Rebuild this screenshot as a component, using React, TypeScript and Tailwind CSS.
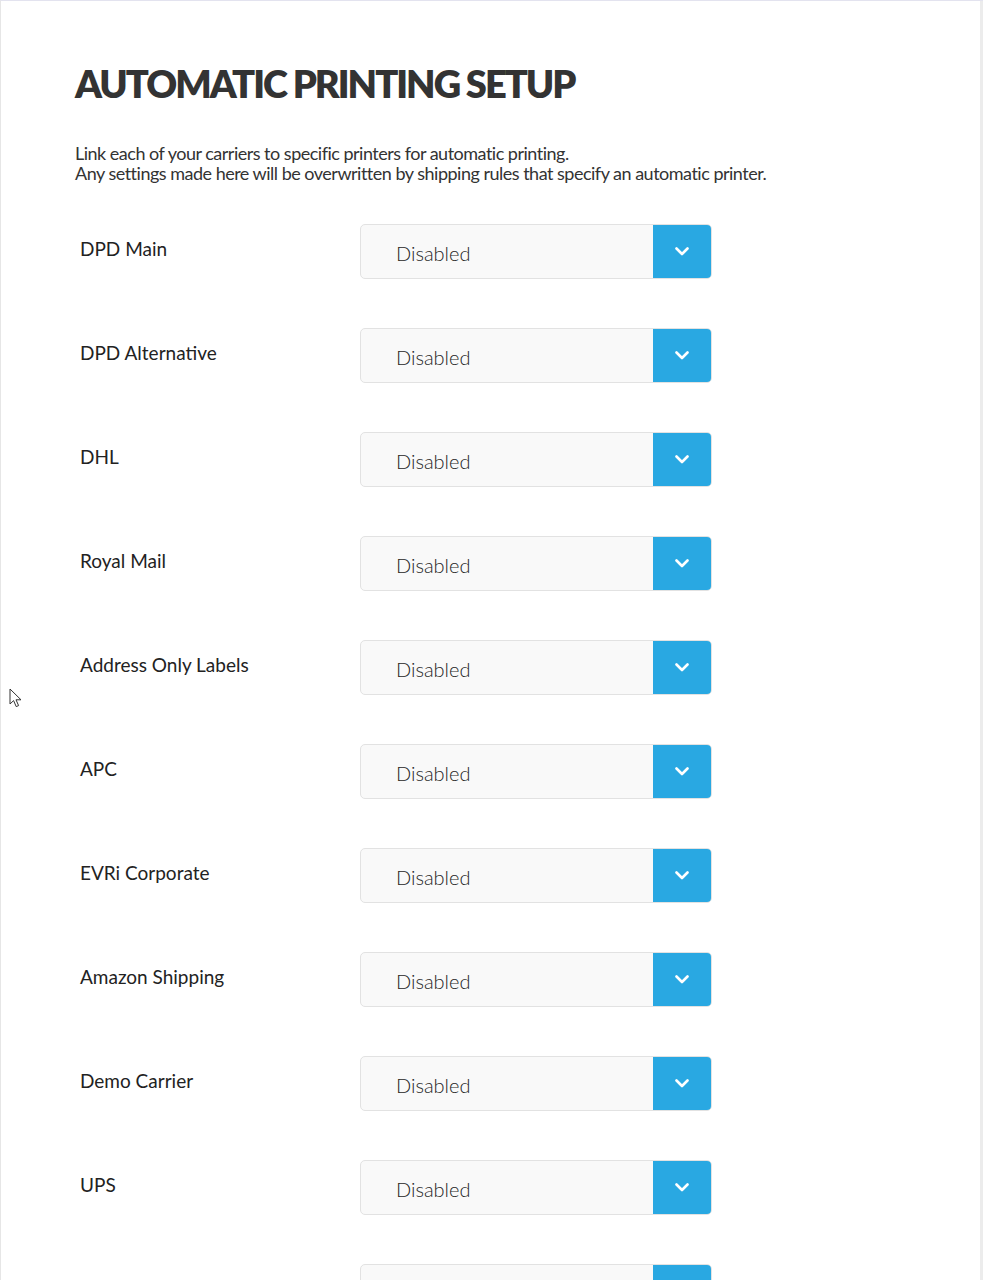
const CARRIERS = [
  'DPD Main',
  'DPD Alternative',
  'DHL',
  'Royal Mail',
  'Address Only Labels',
  'APC',
  'EVRi Corporate',
  'Amazon Shipping',
  'Demo Carrier',
  'UPS',
  'Yodel Direct',
];

function Chevron() {
  return (
    <svg width="14" height="9" viewBox="0 0 14 9" fill="none">
      <path d="M1.5 1.5 7 7l5.5-5.5" stroke="white" strokeWidth="2.6" strokeLinecap="round" strokeLinejoin="round" />
    </svg>
  );
}

function PrinterSelect() {
  return (
    <div className="flex h-[55px] w-[352px] overflow-hidden rounded-[5px] border border-[#e2e2e2] bg-[#f9f9f9]">
      <div className="flex flex-1 items-center pl-[35px] pt-[3px] text-[20px] font-light text-[#1f1f1f]">Disabled</div>
      <div className="flex w-[58px] items-center justify-center bg-[#29a8e2]">
        <Chevron />
      </div>
    </div>
  );
}

export default function App() {
  return (
    <div
      className="relative h-[1280px] overflow-hidden border-l border-t border-l-[#e6e6e6] border-t-[#e3e3ef] bg-white text-[#333]"
      style={{ fontFamily: 'Lato, "Open Sans", sans-serif' }}
    >
      <div className="absolute right-0 top-0 h-full w-[3px] bg-[#ececec]" />
      <div className="pl-[74px] pt-[60px]">
        <h1 className="text-[38px] font-extrabold leading-[44px] tracking-[-2px] text-[#333]">AUTOMATIC PRINTING SETUP</h1>
        <p className="mt-[38px] text-[18px] leading-[20px] tracking-[-0.5px] text-[#333]">
          Link each of your carriers to specific printers for automatic printing.
          <br />
          Any settings made here will be overwritten by shipping rules that specify an automatic printer.
        </p>
        <div className="mt-[41px] flex flex-col gap-[49px]">
          {CARRIERS.map((c) => (
            <div key={c} className="flex items-center">
              <div className="w-[285px] pb-[4px] pl-[5px] text-[19px] text-[#222]">{c}</div>
              <PrinterSelect />
            </div>
          ))}
        </div>
      </div>
      <svg className="absolute left-[8px] top-[687px]" width="14" height="20" viewBox="0 0 14 20">
        <path d="M1 1v15l3.6-3.4 2.6 6 2.4-1-2.6-5.8H12z" fill="white" stroke="#333" strokeWidth="1" strokeLinejoin="round" />
      </svg>
    </div>
  );
}
